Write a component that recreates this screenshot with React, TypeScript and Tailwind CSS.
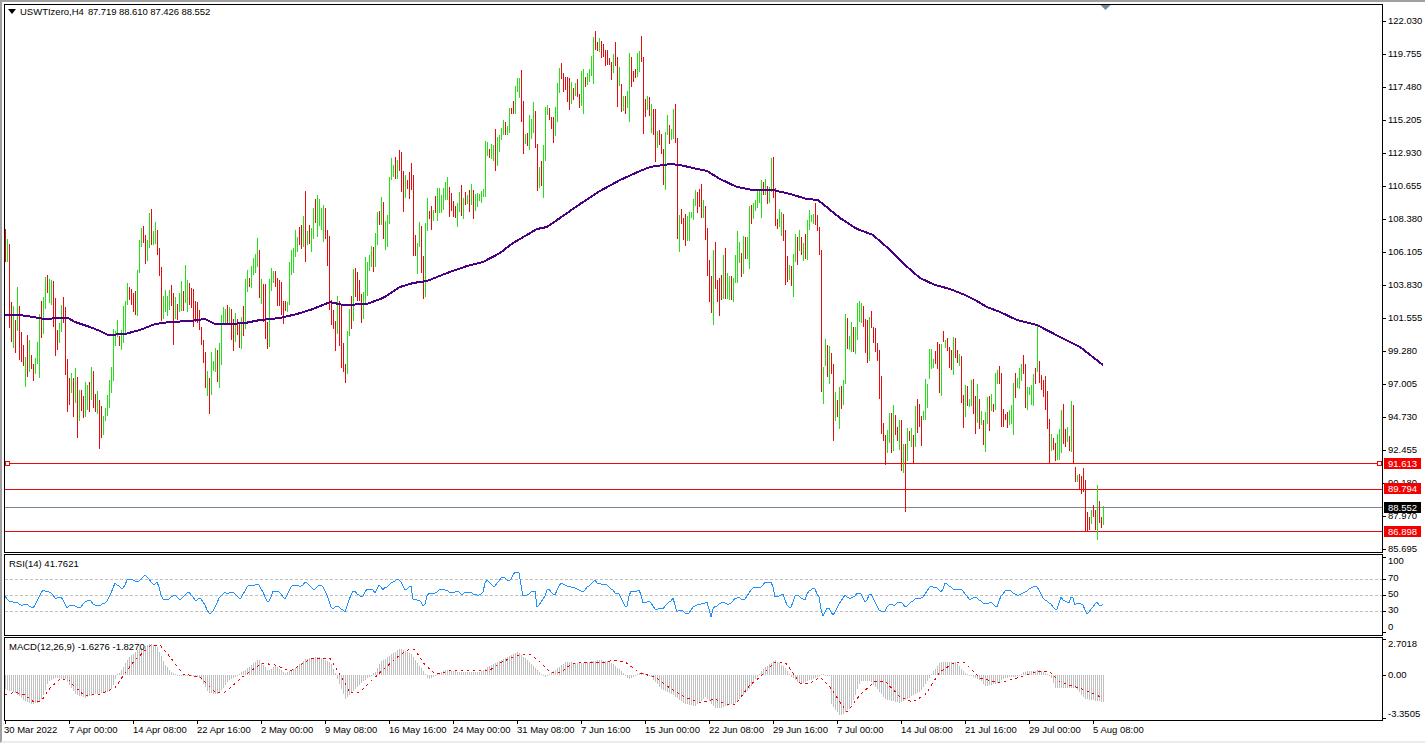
// USWTIzero H4 chart, bars are grouped by where they were read from: [first x, y offset, bars]
const barSegments: [number, number, string][] = [
  [5, 200, "r87-187 g117-187 r132-383 r306-425 g318-443 r360-458 g261-392 r318-480 r396-485 r435-497 g470-560 r405-530 g420-515 r465-506 r492-542 g475-522 g426-491 g342-533 r303-413 g291-401 g231-327 r225-278 g237-309 g240-315 r243-381 r294-467 r390-450 g369-429 g315-396 r291-369 r321-525 r477-636 r534-615 g519-579 r534-651 g504-609 r531-714 g570-663 r570-633 r588-654 g546-651 g555-630 r546-636 g501-600 r513-624 r582-636 g573-642 r600-747 r618-714 g648-705 g624-663 g585-648 g540-624 g501-579 g387-543 g393-438 g360-411 r408-438 g390-450 g318-429 g303-405 g249-315 r261-300 r267-315 r279-336 r273-345 g210-348 g120-219 g84-141 r78-129 r105-192 g120-183 g40-143 r27-135 g93-135 g66-132 r90-165 r144-228 r201-363 g288-357 g270-336 g288-348 g270-330 r255-318 r279-435 g291-357 r312-360 g279-336 g243-333 r273-333 g195-309 g240-336 r249-315 r264-324 r267-381 r303-366 r306-369 r330-390 r381-435 r420-489 r456-564 g513-588 r534-642 g456-585 g483-513 g444-516 r450-546 g429-564 g345-495 g321-372 g327-372 r315-372 g321-372 r327-420 r357-453 g339-426 r357-405 r369-444 g351-447 r318-408 g237-387 g210-276 r234-261 g198-264 g174-225 g162-219 g114-201 r150-294 g237-312 r252-366 r252-417 r366-447 g237-441 g204-273 g213-249 r213-261 r234-318 r240-318"],
  [281, 130, "r456-555 r513-582 r513-543 g516-546 g396-525 g360-435 g354-429 g300-381 g321-366 r291-345 r285-357 g258-351 r183-396 g303-345 r285-342 g294-366 g234-327 r207-279 g195-321 g207-288 g234-300 g225-336 r234-327 r300-408 r318-540 r510-585 r540-597 r573-663 g498-612 r513-648 r522-714 r639-726 r702-759 g603-732 g537-618 r498-597 g417-573 r414-501 r426-513 r450-513 r492-579 g486-567 g381-525 g396-498 g375-423 g348-411 r351-426 g309-411 g246-345 r243-285 g201-285 r216-327 g273-360 g255-351 g141-282 g84-150 g105-141 r81-147 g90-147 r60-123 r66-186 r123-246 g135-204 r150-177 r126-207 r99-180 r135-378 r315-378 g339-432 g276-351 r288-429 r378-507 g279-501 g204-303 r243-267 r228-300 g240-273 r198-249 g174-273 g174-249 g195-249 g174-240 g156-210 g141-210 r171-261 r189-243 r213-261 r228-264 g219-291 g186-246 r165-258 g204-267 r186-225 g195-222 r180-246 g162-225 r180-267 g192-243 g189-231 g192-213"],
  [481, 50, "g423-459 g417-441 g273-441 g276-318 r297-324 g282-327 g285-333 r237-363 g261-348 g255-306 g234-270 g210-255 r216-255 g228-255 g174-249 r174-192 r153-192 g108-192 g84-126 g84-144 r60-216 r153-312 g252-282 r249-288 g195-300 g207-267 g156-249 r183-294 r282-423 g351-414 r333-408 g285-444 g171-333 g165-195 r174-210 r201-237 r201-279 g171-258 g99-216 g54-129"],
  [561, 20, "r129-177 r159-216 r171-210 r171-246 r174-270 g186-252 r204-240 g189-228 r177-231 r222-264 g153-258 g147-282 r171-201 g159-195 g147-186 g108-168 g51-192 r33-90 r66-93 g54-96 r63-114 r72-111 r90-138 r90-135 r114-135 r126-180 g102-159 r66-138 r111-261 g141-198 r192-276 g228-273 r228-282 g213-264 g99-306 r111-201 r153-186 r147-174 g99-171 g93-156 r48-126 r111-342 r237-291 g228-270 r231-288 g252-339 r267-345 r267-426 g333-384 r330-375 r342-402 r387-495 g336-510 g285-345 r315-372 g327-360 g267-357 r252-369 r354-657"],
  [679, 150, "g195-306 r177-222 r204-270 r192-288 g198-273 g186-273 g186-204 g147-210 g120-168 r126-189 r117-171 r102-204 g150-204 r168-270 r234-378 r330-456 r378-489 g300-525 r276-417 r390-456 r384-498 r375-450 g315-447 r294-447 g369-447 g378-450 r378-450 g384-456 g315-399 g243-399 g276-339 r309-381 g258-372 r261-327 g261-327 g168-357 r165-222 g159-207 g150-183 g117-174 g117-159 g90-204 r96-135 g87-135 r108-162 g111-159 g24-126 r21-144 r114-228 r207-237 g177-231 g186-258 r192-273 r240-405 r318-396 g345-390 r348-408 g312-441 g252-336 r261-345 g240-303 r261-315 g279-333 r252-327 g210-330 g180-240 g195-216 g192-222 r159-225 r195-243 r231-315 r300-726 g651-762 g567-648 r585-681 g588-702 r609-672 r642-873 g726-813 r750-801 g711-837 r708-777 g690-765 g492-702 r504-597 g558-600 g516-606 r531-606 g531-612 g459-570 g453-516 g459-519 r468-531 r507-609 r510-639 g501-633 r483-534 r531-579 r534-606 r579-633 r600-747 r678-852 r819-873 r855-945 g840-909 g789-879"],
  [891, 300, "r339-459 g315-453 r345-405 r381-423 g360-450 r360-513 g432-519 r432-636 g384-483 r393-423 g384-441 r405-490 g318-441 r297-399 r312-381 r348-438 g333-360 g237-360 g252-324 g147-237 g147-207 g177-204 r153-192 r126-207 r132-279 g132-288 r93-126 g120-144 r114-153 r141-204 r150-210 g111-225 r114-174 r150-189 g162-198 r168-309 r285-384 g255-351 r258-318 g297-321 g240-318 r237-342 r288-402 g252-369 r297-387 g333-375 r360-435 g336-456 g291-372 r288-393 g282-333 r312-336 g219-330 g210-252 r198-252 r219-381 r327-381 r342-360 r336-384 g330-375 g315-372 g249-405 r219-294 g234-264 g204-267 g192-243 r165-222 r192-324 g261-330 g261-285 g255-315 g222-318 r204-252 g75-216 r183-249 r225-270 r240-291 r228-330 r273-387 r357-489 g402-453 r414-450 r429-483 g402-480 g387-480 g330-459 r312-432 r387-441 g381-426 r408-453 g303-456 r315-492 r501-546 g525-546 r522-567 r528-582 r504-576 r540-693 r636-693 r651-690 g630-672 r615-651 r630-690 g555-720 r603-669 r651-684 g618-675"],
];

let redBars = "";
let greenBars = "";
for (const [firstX, offset, text] of barSegments) {
  text.split(" ").forEach((tok, i) => {
    const [a, b] = tok.slice(1).split("-").map(Number);
    const d = `M${firstX + 2 * i + 0.5} ${Math.round(offset + a / 3)}V${Math.round(offset + b / 3)}`;
    if (tok[0] === "r") redBars += d;
    else greenBars += d;
  });
}

const maLine =
  "5,315 20,315 33,317 45,319 60,318 68,318 75,322 90,327 100,331 108,335 125,334 140,330 155,324 170,322 190,321 205,319 215,324 230,324 245,323 260,320 280,318 297,314 313,309 330,302 343,305 367,304 383,298 400,287 413,283 427,281 447,273 467,266 483,262 500,253 513,243 520,239 537,229 547,227 560,218 580,204 600,191 620,180 640,171 650,167 670,164 680,165 693,168 707,171 720,179 737,187 753,190 773,190 790,194 807,199 818,200 840,218 857,229 873,235 890,250 905,265 920,278 935,285 950,289 965,295 975,300 987,307 1000,312 1017,320 1037,325 1060,337 1080,347 1103,365";

const rsiAnchors =
  "5,595 9,602 12,604 17,601 23,605 33,606 38,600 43,591 50,590 55,600 62,595 67,608 75,605 80,608 90,599 100,608 110,595 115,585 122,587 128,580 140,580 145,577 150,579 152,583 157,583 162,599 172,597 180,598 188,593 195,599 200,597 208,612 212,611 218,602 225,591 232,593 240,597 247,588 258,583 262,592 268,603 273,590 285,597 292,587 305,583 313,588 320,584 328,597 332,608 338,608 345,610 350,597 354,592 360,594 362,597 367,591 372,588 375,591 380,584 382,592 390,582 400,581 405,588 412,588 413,600 420,598 424,608 428,594 440,591 448,589 455,593 462,593 465,591 473,595 483,592 486,580 495,585 503,578 510,579 516,573 520,573 522,594 530,595 535,590 537,606 545,598 548,588 555,594 560,585 568,584 575,590 582,590 590,586 595,579 603,585 612,588 618,595 625,605 627,604 630,590 635,594 640,588 643,602 650,603 655,608 660,607 663,610 668,602 673,597 677,613 680,611 690,612 695,607 700,602 707,603 711,618 714,605 722,604 728,604 735,598 742,600 748,594 755,588 762,584 772,582 775,595 783,596 787,605 790,607 795,597 805,598 808,591 815,590 820,598 822,617 828,608 833,614 835,610 845,596 855,597 860,593 866,601 870,594 880,610 885,612 890,604 900,603 905,607 910,601 918,600 923,595 930,588 938,587 942,592 945,584 955,588 962,591 970,598 980,600 987,603 997,606 1000,597 1010,589 1020,597 1028,588 1038,588 1043,596 1048,603 1056,609 1061,597 1064,603 1069,603 1072,593 1075,604 1083,605 1087,612 1093,608 1098,602 1100,605 1103,603";

const signalLine =
  "5,695 15,692 25,695 35,703 42,700 50,688 60,679 68,679 75,687 85,696 100,694 115,688 125,673 135,660 150,646 160,645 170,657 183,674 200,677 215,692 225,692 245,675 262,663 275,665 290,671 310,659 330,658 345,683 350,693 360,692 372,680 385,668 400,655 410,649 415,650 425,665 435,674 445,672 452,670 490,670 500,663 515,656 530,654 540,662 550,672 560,673 570,665 580,662 600,663 615,660 625,662 640,673 655,677 670,688 685,697 700,703 715,699 725,704 735,705 750,685 760,677 775,662 785,662 800,683 810,683 820,677 830,687 840,702 847,712 860,695 875,681 885,681 900,697 912,702 925,695 940,672 955,662 965,663 980,678 1000,683 1020,677 1040,671 1050,672 1060,682 1085,690 1103,698";

const histAnchors =
  "5,688 15,692 22,698 30,703 38,702 42,697 48,680 55,677 65,678 75,693 85,697 95,693 105,692 112,687 116,675 120,672 125,663 130,656 140,648 150,643 157,647 165,665 172,673 178,675 195,675 200,677 208,692 218,693 228,680 235,676 245,670 258,659 268,671 275,666 285,673 295,668 305,659 318,657 330,662 338,680 345,698 350,693 360,683 367,677 375,672 380,662 390,655 400,648 410,653 420,667 428,678 436,675 445,670 460,672 480,672 490,665 505,658 518,652 530,663 540,673 545,676 555,670 565,662 580,663 600,660 610,662 620,670 628,678 640,672 650,675 660,687 670,692 685,703 695,705 705,696 715,707 720,707 735,702 750,687 755,678 765,667 775,660 785,668 790,675 800,683 815,677 820,674 829,675 830,702 840,715 850,707 860,680 870,680 885,698 900,702 920,690 930,675 940,662 955,662 965,673 980,679 985,685 995,683 1005,677 1020,675 1022,672 1040,670 1050,675 1055,687 1075,687 1085,698 1103,701";

function parsePoints(text: string) {
  return text.split(" ").map((p) => p.split(",").map(Number) as [number, number]);
}

function valueAt(points: [number, number][], x: number) {
  for (let i = 1; i < points.length; i++) {
    const [x0, y0] = points[i - 1];
    const [x1, y1] = points[i];
    if (x <= x1) return y0 + ((y1 - y0) * (x - x0)) / (x1 - x0);
  }
  return points[points.length - 1][1];
}

const histPoints = parsePoints(histAnchors);
const rsiPoints = parsePoints(rsiAnchors);

let histPath = "";
const rsiLine: string[] = [];
for (let x = 5; x <= 1103; x += 2) {
  const h = Math.round(valueAt(histPoints, x));
  histPath += `M${x + 0.5} 675V${h >= 675 ? h + 1 : h}`;
  // the RSI wobbles from bar to bar, so keep it from looking too smooth
  const wobble = Math.round(Math.sin(x * 12.9898) * 1.6);
  rsiLine.push(`${x},${Math.round(valueAt(rsiPoints, x)) + wobble}`);
}

const priceTicks = ["122.030", "119.755", "117.480", "115.205", "112.930", "110.655", "108.380", "106.105", "103.830", "101.555", "99.280", "97.005", "94.730", "92.455", "90.180", "87.970", "85.695"];
const timeTicks = ["30 Mar 2022", "7 Apr 00:00", "14 Apr 08:00", "22 Apr 16:00", "2 May 00:00", "9 May 08:00", "16 May 16:00", "24 May 00:00", "31 May 08:00", "7 Jun 16:00", "15 Jun 00:00", "22 Jun 08:00", "29 Jun 16:00", "7 Jul 00:00", "14 Jul 08:00", "21 Jul 16:00", "29 Jul 00:00", "5 Aug 08:00"];
const priceTags = [
  { label: "91.613", cls: "top-[454px] bg-[#f50000] text-white" },
  { label: "89.794", cls: "top-[479px] bg-[#f50000] text-white" },
  { label: "88.552", cls: "top-[498px] bg-black text-white" },
  { label: "86.898", cls: "top-[522px] bg-[#f50000] text-white" },
];

function AxisRow({ label, className = "", tick = "", text = "-translate-y-px" }: { label: string; className?: string; tick?: string; text?: string }) {
  return (
    <div className={`flex h-[16px] shrink-0 items-center ${className}`}>
      <div className={`h-px w-[3px] bg-black ${tick}`} />
      <span className={`ml-[2px] whitespace-nowrap ${text}`}>{label}</span>
    </div>
  );
}

export default function App() {
  return (
    <div className="h-[743px] w-[1425px] overflow-hidden border-t-2 border-b-2 border-l-2 border-t-[#a0a0a0] border-b-[#ececec] border-l-[#a0a0a0] bg-white pt-[2px] pl-[2px] font-['Liberation_Sans',Arial,sans-serif] text-[9.5px] leading-none text-black">
      {/* main window */}
      <div className="flex h-[549px]">
        <div className="relative w-[1379px] shrink-0 border border-black">
          <svg viewBox="5 5 1377 547" className="block h-[547px] w-[1377px]">
            <g shapeRendering="crispEdges" fill="none" strokeWidth="1">
              <path d="M5 463.5H1382M5 489.5H1382M5 531.5H1382" stroke="#e80a0a" />
              <path d="M5 507.5H1382" stroke="#778899" />
              <path d={greenBars} stroke="#22e214" />
              <path d={redBars} stroke="#e80a0a" />
              <rect x="5.5" y="461.5" width="4" height="4" fill="#fff" stroke="#e80a0a" />
              <rect x="1377.5" y="461.5" width="4" height="4" fill="#fff" stroke="#e80a0a" />
              <polyline points={maLine} stroke="#4b0082" strokeWidth="2" />
            </g>
            <polygon points="1100.5,5 1110.5,5 1105.5,10" fill="#778899" />
          </svg>
          <div className="absolute top-[2px] left-[3px] flex items-center">
            <svg width="8" height="5" viewBox="0 0 8 5" className="mr-[4px]">
              <polygon points="0,0 8,0 4,5" fill="#000" />
            </svg>
            <span>USWTIzero,H4</span>
            <span className="ml-[4px] tracking-[-0.07px]">87.719 88.610 87.426 88.552</span>
          </div>
        </div>
        <div className="relative flex-1 pt-px">
          {priceTicks.map((p) => (
            <AxisRow key={p} label={p} className="!h-[33px]" />
          ))}
          {priceTags.map((t) => (
            <div key={t.label} className={`absolute left-px flex h-[11px] w-[37px] items-center justify-center ${t.cls}`}>
              {t.label}
            </div>
          ))}
        </div>
      </div>

      {/* RSI window */}
      <div className="mt-px flex h-[82px]">
        <div className="relative w-[1379px] shrink-0 border border-black">
          <svg viewBox="5 555 1377 80" className="block h-[80px] w-[1377px]">
            <g fill="none" shapeRendering="crispEdges">
              <path d="M5 579.5H1382M5 595.5H1382M5 611.5H1382" stroke="#c0c0c0" strokeDasharray="3 2" />
              <polyline points={rsiLine.join(" ")} stroke="#1e90ff" strokeWidth="1" />
            </g>
          </svg>
          <span className="absolute top-[4px] left-[4px]">RSI(14) 41.7621</span>
        </div>
        <div className="flex-1">
          <AxisRow label="100" tick="-translate-y-[5px]" />
          <AxisRow label="70" className="mt-px" />
          <AxisRow label="50" />
          <AxisRow label="30" />
          <AxisRow label="0" className="mt-px" tick="translate-y-[4px]" />
        </div>
      </div>

      {/* MACD window */}
      <div className="mt-px flex h-[84px]">
        <div className="relative w-[1379px] shrink-0 border border-black">
          <svg viewBox="5 638 1377 82" className="block h-[82px] w-[1377px]">
            <g fill="none" shapeRendering="crispEdges">
              <path d={histPath} stroke="#c0c0c0" />
              <polyline points={signalLine} stroke="#f00000" strokeDasharray="2.5 3.5" />
            </g>
          </svg>
          <span className="absolute top-[4px] left-[4px]">MACD(12,26,9) -1.6276 -1.8270</span>
        </div>
        <div className="flex-1 -translate-y-px">
          <AxisRow label="2.7018" tick="-translate-y-[5px]" text="" />
          <AxisRow label="0.00" className="mt-[15px]" text="" />
          <AxisRow label="-3.3505" className="mt-[23px]" tick="translate-y-[4px]" text="" />
        </div>
      </div>

      {/* time axis */}
      <div className="flex pl-px">
        {timeTicks.map((t, i) => (
          <div key={t} className="w-[64px] shrink-0">
            <div className="h-[3px] w-px bg-black" />
            <div className={`whitespace-nowrap leading-[12px] ${i === 0 ? "-ml-px" : ""}`}>{t}</div>
          </div>
        ))}
      </div>
    </div>
  );
}
